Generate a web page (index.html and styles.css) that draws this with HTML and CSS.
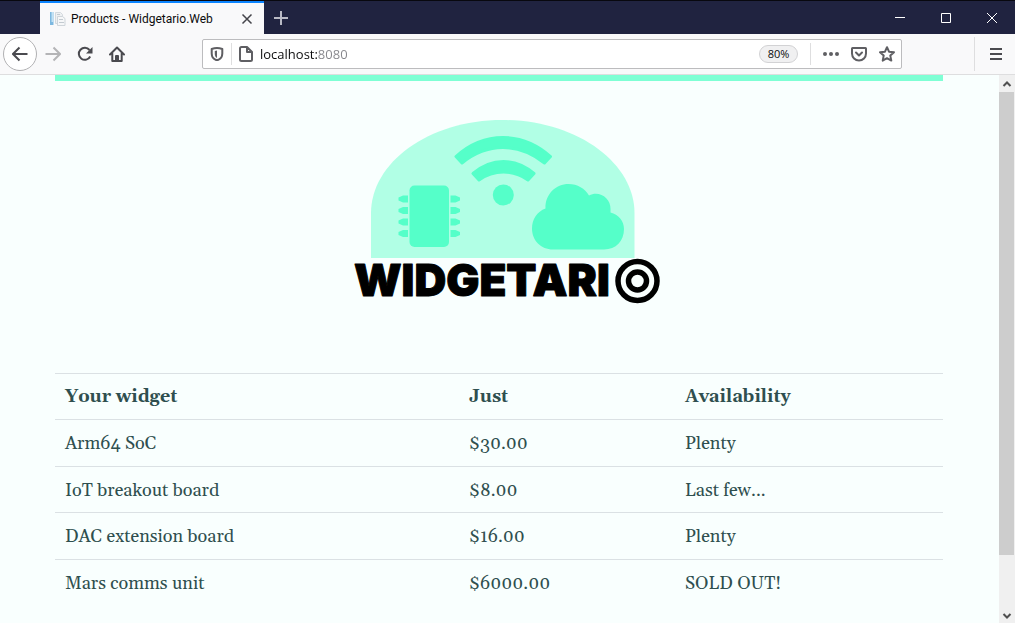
FILE: index.html
```html
<!DOCTYPE html>
<html lang="en">
<head>
<meta charset="utf-8">
<title>Products - Widgetario.Web</title>
<link rel="stylesheet" href="styles.css">
</head>
<body>
<div class="window">
  <header class="titlebar">
    <div class="tab">
      <svg class="favicon" width="16" height="16" viewBox="0 0 16 16">
        <path fill="#7db8e0" d="M0 1h3.500v13H0z"/><path fill="#c3e2f5" d="M1.500 1h2v10h-2z"/>
        <path fill="#eef0f2" stroke="#d3d9de" d="M5.500 1.500h5l2 2v9h-7z"/>
        <path fill="#f6f7f8" stroke="#cfd5da" d="M7.500 5.500h5l2.500 2v7H7.500z"/>
        <path stroke="#c3cad0" d="M7 3.500h3M9 8.500h4M9 11.500h5"/>
      </svg>
      <span class="tab-title">Products - Widgetario.Web</span>
      <button class="tab-close" aria-label="Close tab">
        <svg width="12" height="12" viewBox="0 0 12 12"><path fill="none" stroke="#45454a" stroke-width="1.500" d="M1.500 1.500l9 9M10.500 1.500l-9 9"/></svg>
      </button>
    </div>
    <button class="new-tab" aria-label="New tab">
      <svg width="14" height="14" viewBox="0 0 14 14"><path stroke="#b9bac5" stroke-width="2" d="M7 0v14M0 7h14"/></svg>
    </button>
    <div class="window-buttons">
      <button aria-label="Minimize"><svg width="10" height="10" viewBox="0 0 10 10"><path stroke="#fff" d="M0 4.500h10"/></svg></button>
      <button aria-label="Maximize"><svg width="10" height="10" viewBox="0 0 10 10"><path fill="none" stroke="#fff" d="M.5.5h9v9h-9z"/></svg></button>
      <button aria-label="Close"><svg width="10" height="10" viewBox="0 0 10 10"><path stroke="#fff" d="M0 0l10 10M10 0L0 10"/></svg></button>
    </div>
  </header>

  <nav class="toolbar">
    <button class="back" aria-label="Back">
      <svg width="16" height="16" viewBox="0 0 16 16"><path class="line" d="M15.500 8H1.500M7.500 1.500L1 8l6.500 6.500"/></svg>
    </button>
    <button class="tool forward" aria-label="Forward">
      <svg width="16" height="16" viewBox="0 0 16 16"><path class="line" d="M.5 8h14M8.500 1.500L15 8l-6.500 6.500"/></svg>
    </button>
    <button class="tool" aria-label="Reload">
      <svg width="16" height="16" viewBox="0 0 16 16"><path class="line" d="M13.200 10.500A6 6 0 1 1 12.500 4"/><path class="solid" d="M15.500 1v6.500H9z"/></svg>
    </button>
    <button class="tool" aria-label="Home">
      <svg width="16" height="16" viewBox="0 0 16 16"><path class="line" stroke-linecap="round" stroke-linejoin="round" d="M1 8.500L8 1.500l7 7M3.300 7.500V15h9.400V7.500"/><path class="solid" d="M6 15v-5q0-1 1-1h2q1 0 1 1v5z"/></svg>
    </button>
    <div class="urlbar">
      <button class="icon shield" aria-label="Tracking protection">
        <svg width="14" height="14" viewBox="0 0 14 14"><path class="line" stroke-linejoin="round" d="M7 1C4.500 1 3 1.500 1.700 2v4.500C1.700 10 4 12.500 7 13.300c3-.8 5.300-3.300 5.300-6.800V2C11 1.500 9.500 1 7 1z"/><path class="solid" d="M7 3.500v7.500C5.300 10 4.800 8.500 4.800 6.500V4z"/></svg>
      </button>
      <button class="icon site" aria-label="Site information">
        <svg width="16" height="16" viewBox="0 0 16 16"><path class="line" stroke-linejoin="round" d="M3.500 1H9l5 5v7.500q0 1.500-1.500 1.500h-9Q2 15 2 13.500v-11Q2 1 3.500 1zM9 1v5h5"/></svg>
      </button>
      <input class="address" type="text" aria-label="Address" value="localhost:8080">
      <button class="zoom">80%</button>
      <div class="actions">
        <button class="icon" aria-label="Page actions"><svg width="16" height="16" viewBox="0 0 16 16"><circle class="solid" cx="2" cy="8" r="2"/><circle class="solid" cx="8" cy="8" r="2"/><circle class="solid" cx="14" cy="8" r="2"/></svg></button>
        <button class="icon" aria-label="Save to Pocket"><svg width="16" height="16" viewBox="0 0 16 16"><path class="line" stroke-linejoin="round" d="M1.500 2h13q.5 0 .5.500V7.500a7 7 0 0 1-14 0V2.500q0-.5.500-.5z"/><path class="line" stroke-linecap="round" stroke-linejoin="round" d="M5 6.500l3 3 3-3"/></svg></button>
        <button class="icon" aria-label="Bookmark"><svg width="16" height="16" viewBox="0 0 16 16"><path class="line" stroke-linejoin="round" d="M8 1.200l2 4.500 5 .5-3.700 3.400 1 5L8 12.200l-4.300 2.400 1-5L1 6.200l5-.5z"/></svg></button>
      </div>
    </div>
    <button class="menu" aria-label="Menu">
      <svg width="12" height="12" viewBox="0 0 12 12"><path stroke="#4a4a4f" stroke-width="2" d="M0 1h12M0 6h12M0 11h12"/></svg>
    </button>
  </nav>

  <div class="viewport">
    <main class="page">
      <div class="accent"></div>
      <svg class="logo" width="322" height="194" viewBox="338 119 322 194" role="img" aria-label="Widgetario">
        <path fill="#b1ffe5" d="M371 258v-45c0-50 57-93 131.500-93S634.500 163 634.500 213v45z"/>
        <g fill="#55ffc9" stroke="#55ffc9" stroke-width="3" stroke-linejoin="round">
          <path d="M456 156.500Q477 137.500 503 137.500T550.500 156.500L544.500 163Q525 147.500 503 147.500T462 163z"/>
          <path d="M473 173.500Q487 161.500 503.500 161.500T534 173.500L528 180Q517 172 503.500 172T479 180z"/>
        </g>
        <g fill="#55ffc9">
          <circle cx="503.300" cy="195" r="10.500"/>
          <rect x="409.500" y="185.500" width="39.500" height="61.500" rx="5"/>
          <path d="M408 195.500h-5l-4.500 2v3l4.500 2h5zM408 207h-5l-4.500 2v3l4.500 2h5zM408 218.500h-5l-4.500 2v3l4.500 2h5zM408 230h-5l-4.500 2v3l4.500 2h5z"/>
          <path d="M450.500 195.500h5l4.500 2v3l-4.500 2h-5zM450.500 207h5l4.500 2v3l-4.500 2h-5zM450.500 218.500h5l4.500 2v3l-4.500 2h-5zM450.500 230h5l4.500 2v3l-4.500 2h-5z"/>
          <path d="M553 249.500c-12 0-21-9-21-21 0-9 5-17 13.500-20C545 194 556 184 568.500 184c9 0 16.500 4.500 20.500 11.500 10-5.500 22 2.500 21.500 13.500v3.500c8 2 13.500 8.500 13.500 16.500 0 12-8 20.500-20 20.500z"/>
        </g>
        <text class="wordmark" x="354" y="296">WIDGETARI</text>
        <g fill="none" stroke="#000"><circle cx="637.500" cy="281" r="19.500" stroke-width="5.500"/><circle cx="637.500" cy="281" r="9" stroke-width="5.500"/></g>
      </svg>
      <table class="products">
        <thead><tr><th scope="col">Your widget</th><th scope="col">Just</th><th scope="col">Availability</th></tr></thead>
        <tbody>
          <tr><td>Arm64 SoC</td><td>$30.00</td><td>Plenty</td></tr>
          <tr><td>IoT breakout board</td><td>$8.00</td><td>Last few...</td></tr>
          <tr><td>DAC extension board</td><td>$16.00</td><td>Plenty</td></tr>
          <tr><td>Mars comms unit</td><td>$6000.00</td><td>SOLD OUT!</td></tr>
        </tbody>
      </table>
    </main>
    <div class="scrollbar">
      <svg width="16" height="17" viewBox="0 0 16 17"><path fill="none" stroke="#505050" stroke-width="2" d="M4.500 11L8 7.500l3.500 3.500"/></svg>
      <div class="track"><div class="thumb"></div></div>
      <svg width="16" height="17" viewBox="0 0 16 17"><path fill="none" stroke="#505050" stroke-width="2" d="M4.500 8L8 11.500 11.500 8"/></svg>
    </div>
  </div>
</div>
</body>
</html>
```
FILE: styles.css
```css
* { box-sizing: border-box; }
body { margin: 0; font-family: "Open Sans", sans-serif; }
button { display: flex; align-items: center; justify-content: center; padding: 0; border: 0; background: none; font: inherit; flex: none; }
svg { display: block; flex: none; }
.line { fill: none; stroke: currentColor; stroke-width: 2; }
.solid { fill: currentColor; }

.window { display: flex; flex-direction: column; height: 100vh; overflow: hidden; }

.titlebar { display: flex; flex: none; height: 34px; padding-left: 40px; background: #202340; border-top: 1px solid #08080f; }
.tab { display: flex; align-items: center; width: 224px; padding: 0 8px 0 10px; background: #f9f9fa; border-top: 2px solid #0a84ff; }
.tab-title { flex: 1; margin-left: 5px; font: 12px/16px Roboto, "Open Sans", sans-serif; color: #0c0c0d; white-space: nowrap; }
.tab-close { width: 18px; height: 18px; }
.new-tab { width: 34px; }
.window-buttons { display: flex; margin-left: auto; }
.window-buttons button { width: 46px; }

.toolbar { display: flex; flex: none; align-items: center; height: 41px; padding-left: 3px; background: #f9f9fa; border-bottom: 1px solid #dededf; color: #4a4a4f; }
.back { width: 34px; height: 34px; border: 1px solid #b1b1b3; border-radius: 50%; background: #fff; color: inherit; }
.tool { width: 32px; height: 32px; color: inherit; }
.forward { color: #b4b4b6; }
.urlbar { display: flex; flex: 1; align-items: center; height: 30px; margin: 0 72px 0 69px; border: 1px solid #bcbcbe; border-radius: 2px; background: #fff; color: #5f5f63; }
.icon { width: 28px; height: 22px; color: inherit; }
.shield { width: 29px; border-right: 1px solid #dededf; }
.address { flex: 1; min-width: 0; padding: 0; border: 0; outline: 0; font: 13px/20px "Open Sans", sans-serif; color: transparent; background: linear-gradient(90deg, #0c0c0d 57px, #85858a 57px); -webkit-background-clip: text; background-clip: text; }
.zoom { width: 39px; height: 18px; margin-right: 12px; border: 1px solid #d2d2d4; border-radius: 9px; background: #f0f0f1; font-size: 11px; line-height: 16px; color: #0c0c0d; }
.actions { display: flex; padding-left: 6px; border-left: 1px solid #dededf; }
.menu { width: 41px; height: 34px; padding-left: 2px; border-left: 1px solid #dededf; }

.viewport { display: flex; flex: 1; min-height: 0; background: #f9fffe; }
.page { flex: 1; padding: 0 56px 0 55px; overflow: hidden; }
.accent { height: 6px; background: #7fffd4; }
.logo { margin: 38px auto 60px; overflow: visible; }
.wordmark { font: 900 44px Inter, sans-serif; fill: #000; stroke: #000; stroke-width: 1px; stroke-linejoin: round; }

.products { width: 100%; border-collapse: collapse; table-layout: fixed; font: 18px/24px Georgia, Gelasio, "Liberation Serif", serif; color: #2f4f4f; }
.products th, .products td { height: 46px; padding: 0 10px; border-top: 1px solid #dbe1e4; text-align: left; }
.products td { padding-top: 2px; }
.products tbody tr:nth-child(odd) td { height: 47px; }
.products th:nth-child(1) { width: 404px; }
.products th:nth-child(2) { width: 216px; }

.scrollbar { display: flex; flex-direction: column; width: 16px; background: #f0f0f0; }
.track { flex: 1; padding-right: 1px; }
.thumb { height: 90%; background: #cdcdcd; }
```
